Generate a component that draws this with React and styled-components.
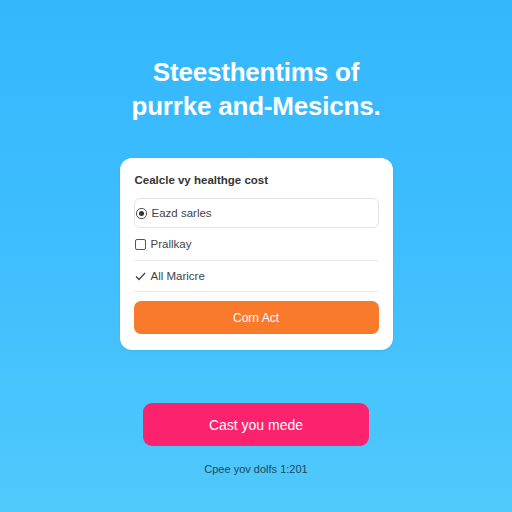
import React from "react";
import styled, { createGlobalStyle } from "styled-components";

const Global = createGlobalStyle`
  html, body { margin: 0; padding: 0; }
  body { font-family: "Liberation Sans", Arial, sans-serif; }
`;

const Page = styled.div`
  width: 512px;
  height: 512px;
  background: linear-gradient(180deg, #34b7fd 0%, #3fbefd 50%, #50c9fc 100%);
  display: flex;
  flex-direction: column;
  align-items: center;
  box-sizing: border-box;
  padding-top: 55px;
`;

const Title = styled.h1`
  margin: 0;
  color: #fff;
  font-family: "Liberation Sans", Arial, sans-serif;
  font-weight: 700;
  font-size: 26px;
  line-height: 34px;
  text-align: center;
  letter-spacing: -0.2px;
`;

const Card = styled.div`
  margin-top: 35px;
  width: 273px;
  box-sizing: border-box;
  background: #fff;
  border-radius: 12px;
  padding: 14px 14px 16px 14px;
  display: flex;
  flex-direction: column;
  box-shadow: 0 1px 3px rgba(0, 0, 0, 0.08);
`;

const Heading = styled.div`
  font-size: 11.5px;
  font-weight: 700;
  color: #333;
  margin: 2px 0 12px 1px;
`;

const Row = styled.div`
  display: flex;
  align-items: center;
  gap: 5px;
  height: ${(p) => p.$h || 32}px;
  box-sizing: border-box;
  padding: 0 1px;
  font-size: 11.5px;
  color: #444;
  border: ${(p) => (p.$boxed ? "1px solid #e2e4e7" : "none")};
  border-radius: ${(p) => (p.$boxed ? "6px" : "0")};
  border-bottom: ${(p) => (p.$boxed ? "1px solid #e2e4e7" : p.$divider ? "1px solid #e8eaec" : "none")};
`;

const Box = styled.span`
  width: 9px;
  height: 9px;
  border: 1px solid #555;
  border-radius: ${(p) => (p.$round ? "5px" : "2px")};
  display: inline-flex;
  align-items: center;
  justify-content: center;
  flex: none;
`;

const Dot = styled.span`
  width: 5px;
  height: 5px;
  background: #333;
  border-radius: 50%;
`;

const OrangeButton = styled.button`
  margin-top: 9px;
  height: 33px;
  border: none;
  border-radius: 7px;
  background: #f97a2a;
  color: #fff;
  font-family: "Liberation Sans", Arial, sans-serif;
  font-size: 12px;
`;

const PinkButton = styled.button`
  margin-top: 53px;
  width: 226px;
  height: 43px;
  border: none;
  border-radius: 9px;
  background: #fc226d;
  color: #fff;
  font-family: "Liberation Sans", Arial, sans-serif;
  font-size: 14px;
`;

const Footer = styled.div`
  margin-top: 17px;
  font-size: 11px;
  color: #23465a;
`;

export default function App() {
  return (
    <Page>
      <Global />
      <Title>
        Steesthentims of
        <br />
        purrke and-Mesicns.
      </Title>
      <Card>
        <Heading>Cealcle vy healthge cost</Heading>
        <Row $boxed $h={30}>
          <Box $round>
            <Dot />
          </Box>
          Eazd sarles
        </Row>
        <Row $divider $h={33}>
          <Box />
          Prallkay
        </Row>
        <Row $divider $h={31}>
          <svg width="11" height="10" viewBox="0 0 11 10">
            <path d="M1 5.5 L4 8.5 L10 2" fill="none" stroke="#444" strokeWidth="1.3" />
          </svg>
          All Maricre
        </Row>
        <OrangeButton>Corn Act</OrangeButton>
      </Card>
      <PinkButton>Cast you mede</PinkButton>
      <Footer>Cpee yov dolfs 1:201</Footer>
    </Page>
  );
}
